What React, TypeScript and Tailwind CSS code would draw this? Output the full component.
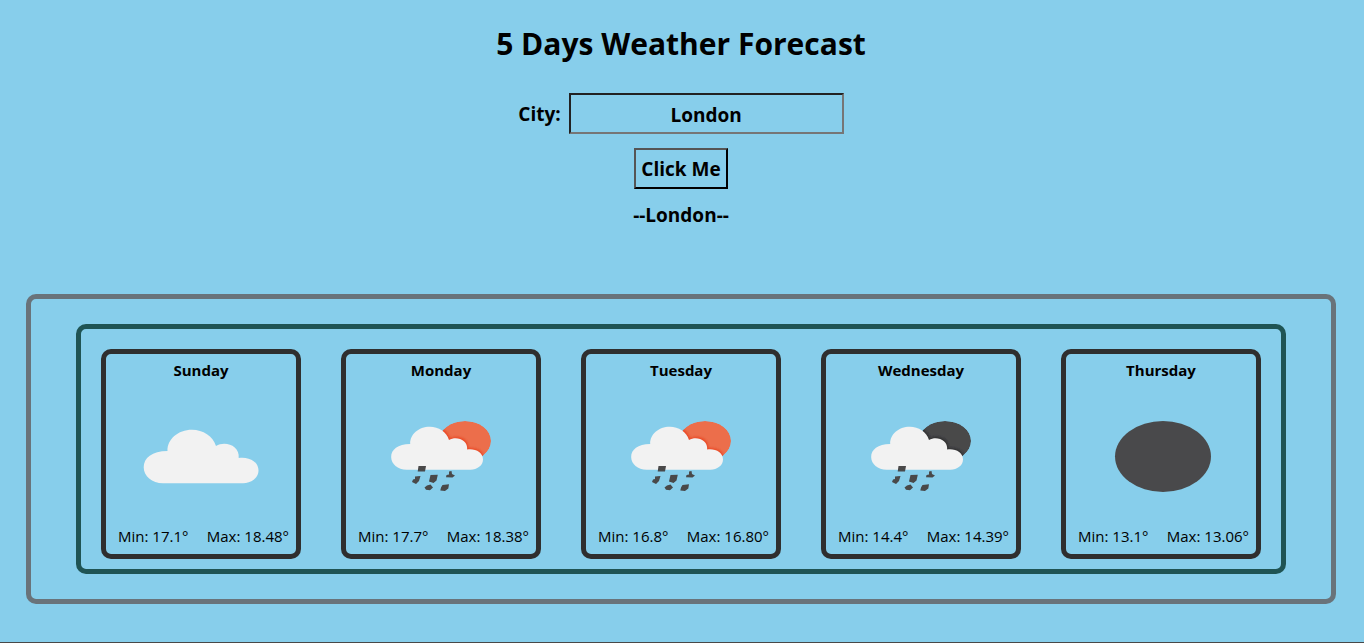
import { useState } from "react";
import type { FormEvent } from "react";

type Sky = "clouds" | "rain-day" | "rain-night" | "clear-night";

interface Day {
  name: string;
  sky: Sky;
  min: string;
  max: string;
}

const days: Day[] = [
  { name: "Sunday", sky: "clouds", min: "17.1", max: "18.48" },
  { name: "Monday", sky: "rain-day", min: "17.7", max: "18.38" },
  { name: "Tuesday", sky: "rain-day", min: "16.8", max: "16.80" },
  { name: "Wednesday", sky: "rain-night", min: "14.4", max: "14.39" },
  { name: "Thursday", sky: "clear-night", min: "13.1", max: "13.06" },
];

const cloudPath =
  "M37 87.3C26 87.3 17.7 80 17.7 71.3C17.7 62 26 55 41.5 55C41 43.5 52 33.7 66 33.7C77 33.7 87 40 90 50C99 44.5 114 49.5 112.7 62C123 60.5 132.5 65.5 132.5 74.5C132.5 82 125 87.3 117 87.3Z";

const dropPath =
  "M52.5 70H60L59 75.5H51.7Z M49 80.5L54.5 80L53 85L50 88L46 86L47 83.5L49 83Z M64.5 79L71.8 78.8L70.5 84.5L67.5 87L63 85.5Z M83 75.5L85.5 75L86 78L89 79.5L86.500 81.500L80 81.3L80.5 79L83 78.5Z M61 89.5L64.5 88.5L67 91.5L64 94.3L60 93.8L58.500 91.5Z M76.500 89L83 88.300L82.3 92.500L79 95L74.3 94.5L75 91.5Z";

function WeatherIcon({ sky, id }: { sky: Sky; id: string }) {
  const night = sky === "rain-night";
  return (
    <svg width="150" height="120" viewBox="0 0 150 120" aria-hidden="true">
      <defs>
        <filter id={`${id}-soft`}>
          <feGaussianBlur stdDeviation="0.7" />
        </filter>
        <filter id={`${id}-drops`}>
          <feGaussianBlur stdDeviation="0.6" />
        </filter>
        <filter id={`${id}-shade`}>
          <feGaussianBlur stdDeviation="1.5" />
        </filter>
        <clipPath id={`${id}-disc`}>
          <ellipse cx="99" cy="45" rx="26" ry="20" />
        </clipPath>
      </defs>
      <g filter={`url(#${id}-soft)`}>
        {sky === "clouds" && <path d={cloudPath} fill="#f2f2f2" />}
        {sky === "clear-night" && <ellipse cx="77" cy="60.5" rx="48" ry="35.5" fill="#4a4a4b" />}
        {(sky === "rain-day" || night) && (
          <>
            <g clipPath={`url(#${id}-disc)`}>
              <ellipse cx="99" cy="45" rx="26" ry="20" fill={night ? "#48484a" : "#ec6e4c"} />
              <path
                d={cloudPath}
                transform="translate(12 2.5) scale(0.8)"
                fill={night ? "#2c2c2c" : "#e8401c"}
                opacity="0.8"
                filter={`url(#${id}-shade)`}
              />
            </g>
            <path d={cloudPath} transform="translate(11 3.9) scale(0.8)" fill="#f2f2f2" />
            <path d={dropPath} fill="#48484a" filter={`url(#${id}-drops)`} />
          </>
        )}
      </g>
    </svg>
  );
}

function DayCard({ day }: { day: Day }) {
  return (
    <li className="flex w-[200px] flex-col items-center rounded-[10px] border-[5px] border-[#2f2f2f] pt-1 pb-1.5">
      <h2 className="text-[15px] leading-6 font-bold">{day.name}</h2>
      <div className="pt-[14px] pb-2">
        <WeatherIcon sky={day.sky} id={day.name} />
      </div>
      <div className="flex w-full justify-between pr-[7px] pl-3 text-[15px] leading-6 whitespace-nowrap">
        <span>Min: {day.min}°</span>
        <span>Max: {day.max}°</span>
      </div>
    </li>
  );
}

export default function App() {
  const [city, setCity] = useState("London");
  const [shown, setShown] = useState("London");

  const submit = (event: FormEvent) => {
    event.preventDefault();
    setShown(city);
  };

  return (
    <div className="flex min-h-screen flex-col border-b border-[#484848] bg-[#87ceeb] pr-7 pl-[26px] font-['Open_Sans','Noto_Sans',sans-serif] text-black">
      <header className="flex flex-col items-center pt-5 text-[19px] font-bold">
        <h1 className="text-[30px] leading-[48px]">5 Days Weather Forecast</h1>
        <form onSubmit={submit} className="flex flex-col items-center gap-[14px] pt-[25px]">
          <div className="flex items-center gap-2">
            <label htmlFor="city" className="pt-0.5">
              City:
            </label>
            <input
              id="city"
              value={city}
              onChange={(event) => setCity(event.target.value)}
              className="h-[41px] w-[275px] border-2 border-t-[#222222] border-r-[#767676] border-b-[#767676] border-l-[#222222] bg-transparent pt-0.5 text-center outline-none"
            />
          </div>
          <button
            type="submit"
            className="h-[41px] border-2 border-t-[#555555] border-r-black border-b-black border-l-[#555555] px-[5px] pt-0.5"
          >
            Click Me
          </button>
        </form>
        <p className="pt-3 leading-7">--{shown}--</p>
      </header>
      <main className="mt-[65px] rounded-[10px] border-[5px] border-[#69737a] px-[45px] py-[25px]">
        <ul className="flex flex-wrap justify-between gap-y-5 rounded-[10px] border-[5px] border-[#1f5454] px-5 pt-5 pb-[10px]">
          {days.map((day) => (
            <DayCard key={day.name} day={day} />
          ))}
        </ul>
      </main>
    </div>
  );
}
